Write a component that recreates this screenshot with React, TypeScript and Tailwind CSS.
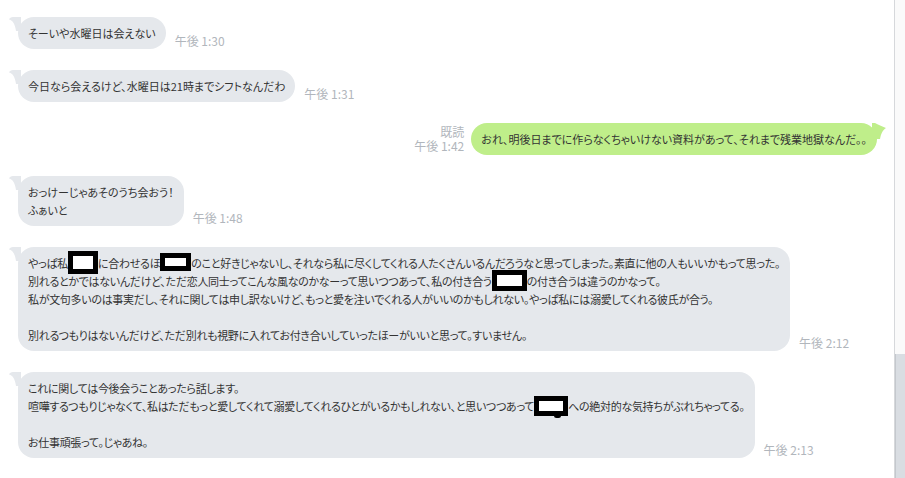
import React from "react";

const font = "font-['Noto_Sans_CJK_JP','Noto_Sans',sans-serif]";

const Redact = ({ w, h, top }: { w: number; h: number; top: number }) => (
  <span className="relative inline-block h-[18px] align-top" style={{ width: w }}>
    <span
      className="absolute left-0 border-[5px] border-black bg-white"
      style={{ width: w, height: h, top }}
    />
  </span>
);

const LeftTail = () => (
  <svg className="absolute left-[-9px] top-0" width="12" height="14" viewBox="0 0 12 14">
    <path d="M12 0 L4 0 C2 0 0.5 1 0 2.5 C3 3 6 6 7 14 L12 14 Z" fill="#e5e8ec" />
  </svg>
);

const RightTail = () => (
  <svg className="absolute right-[-9px] top-0" width="14" height="16" viewBox="0 0 14 16">
    <path d="M0 0 L3 0 C6 2 10 3 14 5 C11 7 9 10 8 16 L0 16 Z" fill="#bfee8a" />
  </svg>
);

const Time = ({ t }: { t: string }) => (
  <span className="mb-[1px] ml-[9px] whitespace-nowrap text-[12px] leading-[14px] text-[#b1b6bc]">{t}</span>
);

const bubbleText = "relative whitespace-nowrap rounded-[16px] px-[10px] py-[7px] text-[11px] leading-[18px] text-[#333] [font-feature-settings:'palt']";

const Left = ({ time, tight, children }: { time: string; tight?: boolean; children: React.ReactNode }) => (
  <div className="flex items-end">
    <div className={bubbleText + " bg-[#e5e8ec]" + (tight ? " tracking-[-0.3px]" : "")}>
      <LeftTail />
      {children}
    </div>
    <Time t={time} />
  </div>
);

export default function App() {
  return (
    <div className={"flex h-[478px] w-[905px] overflow-hidden bg-white " + font}>
      <div className="flex flex-1 flex-col gap-[21px] pl-[18px] pr-[17px] pt-[17px]">
        <Left time="午後 1:30">そーいや水曜日は会えない</Left>
        <Left time="午後 1:31">今日なら会えるけど、水曜日は21時までシフトなんだわ</Left>

        <div className="flex items-center justify-end">
          <div className="mr-[7px] flex flex-col items-end text-[12px] leading-[14px] text-[#b1b6bc]">
            <span>既読</span>
            <span>午後 1:42</span>
          </div>
          <div className={bubbleText + " bg-[#bfee8a]"}>
            <RightTail />
            おれ、明後日までに作らなくちゃいけない資料があって、それまで残業地獄なんだ。。
          </div>
        </div>

        <Left time="午後 1:48">
          おっけーじゃあそのうち会おう！
          <br />
          ふぁいと
        </Left>

        <Left time="午後 2:12" tight>
          やっぱ私<Redact w={30} h={23} top={-3} />に合わせるほ<Redact w={31} h={18} top={-1} />のこと好きじゃないし、それなら私に尽くしてくれる人たくさんいるんだろうなと思ってしまった。素直に他の人もいいかもって思った。
          <br />
          別れるとかではないんだけど、ただ恋人同士ってこんな風なのかなーって思いつつあって、私の付き合う<Redact w={35} h={21} top={-2} />の付き合うは違うのかなって。
          <br />
          私が文句多いのは事実だし、それに関しては申し訳ないけど、もっと愛を注いでくれる人がいいのかもしれない。やっぱ私には溺愛してくれる彼氏が合う。
          <br />
          <br />
          別れるつもりはないんだけど、ただ別れも視野に入れてお付き合いしていったほーがいいと思って。すいません。
        </Left>

        <Left time="午後 2:13" tight>
          これに関しては今後会うことあったら話します。
          <br />
          喧嘩するつもりじゃなくて、私はただもっと愛してくれて溺愛してくれるひとがいるかもしれない、と思いつつあって
          <span className="relative inline-block h-[18px] w-[34px] align-top">
            <span className="absolute left-0 top-[-1px] h-[20px] w-[34px] border-[5px] border-black bg-white" />
            <span className="absolute left-[20px] top-[16px] h-[5px] w-[7px] rounded-full bg-black" />
          </span>
          への絶対的な気持ちがぶれちゃってる。
          <br />
          <br />
          お仕事頑張って。じゃあね。
        </Left>
      </div>

      <div className="flex w-[11px] flex-col border-l border-[#d6d8db] bg-[#fafafa]">
        <div className="flex-1" />
        <div className="h-[124px] border-l border-[#c4c8cd] bg-[#d9dde2]" />
      </div>
    </div>
  );
}
